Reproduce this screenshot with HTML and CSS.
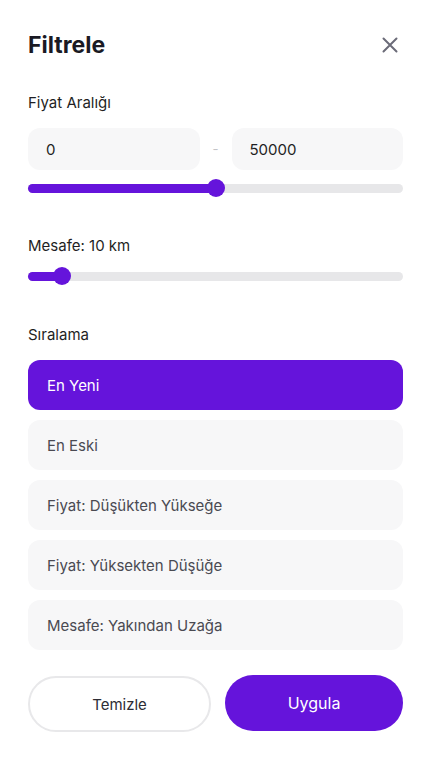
FILE: index.html
```html
<!DOCTYPE html>
<html lang="tr">
<head>
    <meta charset="UTF-8">
    <meta name="viewport" content="width=device-width, initial-scale=1.0">
    <title>Filtrele</title>
    <link rel="stylesheet" href="styles.css">
</head>
<body>
    <div class="sheet">
        <div class="sheet-header">
            <h1>Filtrele</h1>
            <button class="close-btn" aria-label="Kapat">
                <svg width="16" height="16" viewBox="0 0 16 16" fill="none">
                    <path d="M1.5 1.5L14.5 14.5M14.5 1.5L1.5 14.5" stroke="#6b6b78" stroke-width="2" stroke-linecap="round"/>
                </svg>
            </button>
        </div>

        <div class="section price">
            <div class="label">Fiyat Aralığı</div>
            <div class="price-inputs">
                <input type="text" class="price-input" value="0">
                <span class="dash">-</span>
                <input type="text" class="price-input" value="50000">
            </div>
            <div class="slider">
                <div class="track"></div>
                <div class="fill" style="width: 188px;"></div>
                <div class="thumb" style="left: 188px;"></div>
            </div>
        </div>

        <div class="section distance">
            <div class="label">Mesafe: 10 km</div>
            <div class="slider slider-distance">
                <div class="track"></div>
                <div class="fill" style="width: 34px;"></div>
                <div class="thumb" style="left: 34px;"></div>
            </div>
        </div>

        <div class="section sort">
            <div class="label">Sıralama</div>
            <div class="sort-list">
                <button class="sort-option active">En Yeni</button>
                <button class="sort-option">En Eski</button>
                <button class="sort-option">Fiyat: Düşükten Yükseğe</button>
                <button class="sort-option">Fiyat: Yüksekten Düşüğe</button>
                <button class="sort-option">Mesafe: Yakından Uzağa</button>
            </div>
        </div>

        <div class="actions">
            <button class="btn btn-clear">Temizle</button>
            <button class="btn btn-apply">Uygula</button>
        </div>
    </div>
</body>
</html>
```

FILE: styles.css
```css
body {
    margin: 0;
    padding: 0;
    background: #ffffff;
    font-family: 'Inter', 'Noto Sans', sans-serif;
    color: #1f1f24;
}

.sheet {
    width: 430px;
    box-sizing: border-box;
    padding: 31px 27px 0 28px;
}

.sheet-header {
    display: flex;
    justify-content: space-between;
    align-items: center;
    height: 28px;
}

h1 {
    margin: 0;
    font-size: 23px;
    line-height: 28px;
    font-weight: 700;
    color: #1a1a24;
}

.close-btn {
    background: none;
    border: none;
    padding: 0;
    margin-right: 5px;
    width: 16px;
    height: 16px;
    display: flex;
    cursor: pointer;
}

.label {
    font-size: 15px;
    line-height: 20px;
    color: #1f1f24;
}

.price {
    margin-top: 34px;
}

.price-inputs {
    display: flex;
    align-items: center;
    margin-top: 15px;
}

.price-input {
    flex: 1;
    min-width: 0;
    height: 42px;
    box-sizing: border-box;
    border: none;
    border-radius: 12px;
    background: #f7f7f8;
    padding: 0 18px;
    font-family: inherit;
    font-size: 15px;
    color: #1f1f24;
    outline: none;
}

.dash {
    width: 32px;
    text-align: center;
    color: #c4c4c8;
    font-size: 13px;
}

.slider {
    position: relative;
    height: 18px;
    margin-top: 9px;
}

.slider-distance {
    margin-top: 11px;
}

.track {
    position: absolute;
    left: 0;
    right: 0;
    top: 5px;
    height: 9px;
    border-radius: 5px;
    background: #e7e7e9;
}

.fill {
    position: absolute;
    left: 0;
    top: 5px;
    height: 9px;
    border-radius: 5px;
    background: #6514db;
}

.thumb {
    position: absolute;
    top: 0;
    width: 18px;
    height: 18px;
    margin-left: -9px;
    border-radius: 50%;
    background: #6514db;
}

.distance {
    margin-top: 39px;
}

.sort {
    margin-top: 40px;
}

.sort-list {
    display: flex;
    flex-direction: column;
    gap: 10px;
    margin-top: 15px;
}

.sort-option {
    height: 50px;
    border: none;
    border-radius: 12px;
    background: #f7f7f8;
    text-align: left;
    padding: 0 19px;
    font-family: inherit;
    font-size: 15px;
    color: #4a4a52;
    cursor: pointer;
}

.sort-option.active {
    background: #6514db;
    color: #ffffff;
}

.actions {
    display: flex;
    gap: 14px;
    margin-top: 26px;
}

.btn {
    height: 56px;
    border-radius: 28px;
    font-family: inherit;
    font-size: 15px;
    font-weight: 400;
    cursor: pointer;
}

.btn-clear {
    width: 183px;
    background: #ffffff;
    border: 2px solid #e8e8ea;
    color: #2d2d35;
}

.btn-apply {
    flex: 1;
    background: #6514db;
    border: none;
    color: #ffffff;
    font-size: 16px;
    margin-top: -1px;
}
```
